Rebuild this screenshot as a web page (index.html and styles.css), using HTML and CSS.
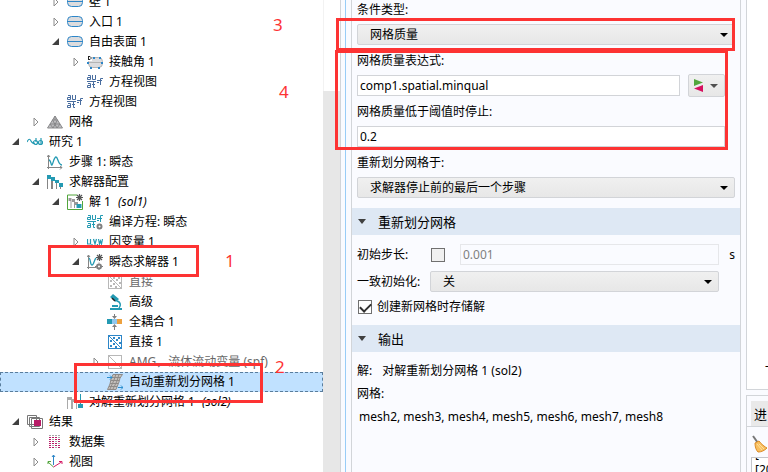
FILE: index.html
```html
<!DOCTYPE html>
<html lang="zh-CN">
<head>
<meta charset="utf-8">
<title>求解器配置</title>
<link rel="stylesheet" href="styles.css">
</head>
<body>
<svg class="sprite" aria-hidden="true">
  <symbol id="closed" viewBox="0 0 8 10"><path d="M2 1v8l4-4z" fill="#fff" stroke="#8c8c8c"/></symbol>
  <symbol id="open" viewBox="0 0 8 10"><path d="M7 1v7H0z" fill="#404040"/></symbol>
  <symbol id="boundary" viewBox="0 0 16 16"><rect x=".5" y="2.500" width="15" height="10" rx="4" fill="#dcdcde" stroke="#2d86c8"/><path d="M1 7.500h14" stroke="#2d86c8"/></symbol>
  <symbol id="contact" viewBox="0 0 16 16"><rect x="1.500" y="3.500" width="14" height="10" rx="4" fill="#dcdcde" stroke="#b4b4b4"/><path d="M1 8.500h14" stroke="#b4b4b4"/><path d="M0 1h5v6H0z" fill="#fff"/><path d="M1.500 2v4M1 2.500h2l1 1v1l-1 1H1" fill="none" stroke="#222"/><path d="M6 3h2v2H6zM12 3h2v2h-2zM0 8h2v2H0zM14 8h2v2h-2zM3 13h2v2H3zM11 13h2v2h-2z" fill="#2d86c8"/></symbol>
  <symbol id="equation" viewBox="0 0 16 16"><g fill="none" stroke="#486d9f"><path d="M1 1.500h2.500v4H.5v-2h3M5.500 1v4.500h3V1M0 7.500h9M1 9.500h2.500v4H.5v-2h3M6.500 8v5.500H8M5 10.500h3M10 6.500h2M10 8.500h2M13.500 11V4.500H16M12 6.500h3"/></g></symbol>
  <symbol id="compiled" viewBox="0 0 16 16"><g fill="none" stroke="#249ab3"><path d="M1 1.500h2.500v4H.5v-2h3M5.500 1v4.500h3V1M0 7.500h9M1 9.500h2.500v4H.5v-2h3M6.500 8v5.500H8M5 10.500h3M10 4.500h2M10 6.500h2M13.500 8V1.500H16M12 4.500h3"/></g><circle cx="12.500" cy="12.500" r="2" fill="#fff" stroke="#808080" stroke-width="2"/></symbol>
  <symbol id="mesh" viewBox="0 0 16 16"><path d="M8 2 15.500 14H.5z" fill="#bdbdbf" stroke="#8b8b8d"/><path d="M5.500 6h5L6 14 3 10h10l-3 4zM8 2v4" fill="none" stroke="#858587"/></symbol>
  <symbol id="study" viewBox="0 0 16 16"><path d="M0 8c2-4 3-3 4-1s3 3 4 2M14 4v7M9 4v4" fill="none" stroke="#249ab3" stroke-width="1.200"/><circle cx="8.500" cy="8.500" r="2" fill="none" stroke="#249ab3" stroke-width="1.200"/><circle cx="13.500" cy="8.500" r="2" fill="none" stroke="#249ab3" stroke-width="1.200"/></symbol>
  <symbol id="curve" viewBox="0 0 16 16"><path d="M1.500 15V1M0 3l1.500-2L3 3M0 13.500h15M13 12l2 1.500-2 2" fill="none" stroke="#858585"/><path d="M2 6c2 0 2 6 3 5s2-8 4-8 2 8 6 8" fill="none" stroke="#249ab3" stroke-width="1.300"/></symbol>
  <symbol id="config" viewBox="0 0 16 16"><path d="M.5 5v10M4.500 5v10M5.500 7v8M9.500 9v6M13.500 11v4" stroke="#858585"/><path d="M0 1h4v4H0zM4 3h4v4H4zM8 6h4v3H8zM12 9h4v4h-4z" fill="#249ab3"/></symbol>
  <symbol id="solution" viewBox="0 0 16 16"><path d="M10 1H.5v14.500h15V7" fill="#fff" stroke="#52a63d"/><path d="M1.500 4h3v10h-1V7h-2zM5 5h3v3h3v6h-1v-3H8v3H7V8H5z" fill="#999"/><path d="M9.500 10h5v4h-5z" fill="#249ab3"/><path d="M12.500 0v7M9 3.500h7M10 1l5 5M15 1l-5 5" stroke="#555" stroke-width="1.200"/></symbol>
  <symbol id="uvw" viewBox="0 0 16 16"><path d="M.5 5v5h3V5M5 10v2M6.500 5 8 10 9.500 5M10.500 10v2M11.500 5l1 5 1-3 1 3 1-5" fill="none" stroke="#249ab3" stroke-width="1.200"/></symbol>
  <symbol id="transient" viewBox="0 0 16 16"><path d="M1.500 15V1M0 3l1.500-2L3 3M0 13.500h9" fill="none" stroke="#858585"/><path d="M2 4c2 1 1 7 3 7s2-5 4-7" fill="none" stroke="#249ab3" stroke-width="1.300"/><path d="M12.500 0v7M9 3.500h7M10 1l5 5M15 1l-5 5" stroke="#555" stroke-width="1.200"/><circle cx="12" cy="12.500" r="2" fill="#fff" stroke="#808080" stroke-width="2"/><path d="M12 8.500v1M12 15v1M8 12.500h1M15 12.500h1" stroke="#808080"/></symbol>
  <symbol id="direct" viewBox="0 0 16 16"><rect x="1.500" y="1.500" width="13" height="13" fill="#fff" stroke="currentColor"/><path d="m2 2 12 12" stroke="currentColor"/><path d="M6 3h2v2H6zM11 3h2v2h-2zM9 5h2v2H9zM3 6h2v2H3zM12 8h2v2h-2zM3 11h2v2H3zM6 9h2v2H6zM8 12h2v2H8z" fill="currentColor"/></symbol>
  <symbol id="amg" viewBox="0 0 16 16"><rect x="1.500" y="1.500" width="13" height="13" fill="#fff" stroke="#b8b8b8"/><path d="m2 2 12 12" stroke="#b8b8b8"/></symbol>
  <symbol id="advanced" viewBox="0 0 16 16"><path d="M3 3 6 0l6 5-3 3zM3 14h12v2H3zM5 11h6v2H5z" fill="#249ab3"/><path d="M10 7c4 1 4 5 2 7" fill="none" stroke="#249ab3" stroke-width="1.500"/><path d="m5 4 3 3" stroke="#222" stroke-width="1.500"/></symbol>
  <symbol id="coupled" viewBox="0 0 16 16"><path d="M0 5h5v5H0z" fill="#249ab3"/><path d="M5 5h5v5H5z" fill="#91c7ee"/><path d="M10 5h5v5h-5z" fill="#eda13e"/><path d="M7.500 0v4M7.500 12v4" stroke="#808080"/><path d="M5 2h5L7.500 5zM5 13h5l-2.500-3z" fill="#808080"/></symbol>
  <symbol id="remesh" viewBox="0 0 16 16"><path d="M6 .5h9.500L13 4l-1 4-3 7.500H.5L3 10l1-5z" fill="#c4c0bc" stroke="#8f8b88"/><path d="M9 0 7 6 3 15M12 0l-2 7-4 8M5 3.500h9M4 6.500h8M3 9.500h8M2 12.500h8" fill="none" stroke="#8f8b88"/><path d="M0 3.500h5M3 1.500l2 2-2 2M11 13.500h5M14 11.500l2 2-2 2" fill="none" stroke="#2d8fd0"/></symbol>
  <symbol id="copy" viewBox="0 0 16 16"><path d="M0 3h5v12H4V6H1v9H0zM5 5h5v10H9V8H6v7H5z" fill="#aaa"/><path d="M13.500 0v12" stroke="#249ab3"/><path d="M10 6h6l-2.500 4zM11 10h5v4h-5z" fill="#249ab3"/></symbol>
  <symbol id="results" viewBox="0 0 16 16"><path d="M.5 1.500h9v9h-9zM2.500 3.500h10v9h-10zM4.500 4.500h11v10h-11z" fill="#fff" stroke="#777"/><path d="M7 6h7v6H7z" fill="#b81c67"/></symbol>
  <symbol id="dataset" viewBox="0 0 16 16"><path d="M2 3.500h2M2 5.500h2M2 7.500h2M2 9.500h2M2 11.500h2M2 13.500h2M5 3.500h2M5 7.500h2M5 9.500h2M5 13.500h2M8 3.500h2M8 5.500h2M8 9.500h2M8 11.500h2M11 5.500h2M11 7.500h2M11 11.500h2M11 13.500h2" stroke="#b81c67"/><path d="M2 1.500h2M5 1.500h2M8 1.500h2M11 1.500h2M5 5.500h2M8 7.500h2M11 3.500h2M11 9.500h2M5 11.500h2M8 13.500h2" stroke="#a8a8a8"/></symbol>
  <symbol id="view" viewBox="0 0 16 16"><g fill="none"><path d="M6.500 11V1M5 3l1.500-2L8 3" stroke="#2d86c8"/><path d="M6.500 13 1 8M1 10V7.500h3" stroke="#52a63d"/><path d="m6.500 13 8-5M12 7.500h3V10" stroke="#d51c67"/></g></symbol>
</svg>

<main class="app">
  <section class="model">
    <ul class="tree">
      <li class="row l2"><svg class="caret"><use href="#closed"/></svg><svg class="icon"><use href="#boundary"/></svg><span>壁 1</span></li>
      <li class="row l2"><svg class="caret"><use href="#closed"/></svg><svg class="icon"><use href="#boundary"/></svg><span>入口 1</span></li>
      <li class="row l2"><svg class="caret"><use href="#open"/></svg><svg class="icon"><use href="#boundary"/></svg><span>自由表面 1</span></li>
      <li class="row l3"><svg class="caret"><use href="#closed"/></svg><svg class="icon"><use href="#contact"/></svg><span>接触角 1</span></li>
      <li class="row l3"><svg class="caret"></svg><svg class="icon"><use href="#equation"/></svg><span>方程视图</span></li>
      <li class="row l2"><svg class="caret"></svg><svg class="icon"><use href="#equation"/></svg><span>方程视图</span></li>
      <li class="row l1"><svg class="caret"><use href="#closed"/></svg><svg class="icon"><use href="#mesh"/></svg><span>网格</span></li>
      <li class="row l0"><svg class="caret"><use href="#open"/></svg><svg class="icon"><use href="#study"/></svg><span>研究 1</span></li>
      <li class="row l1"><svg class="caret"></svg><svg class="icon"><use href="#curve"/></svg><span>步骤 1: 瞬态</span></li>
      <li class="row l1"><svg class="caret"><use href="#open"/></svg><svg class="icon"><use href="#config"/></svg><span>求解器配置</span></li>
      <li class="row l2"><svg class="caret"><use href="#open"/></svg><svg class="icon"><use href="#solution"/></svg><span>解 1 <i>(sol1)</i></span></li>
      <li class="row l3"><svg class="caret"></svg><svg class="icon"><use href="#compiled"/></svg><span>编译方程: 瞬态</span></li>
      <li class="row l3"><svg class="caret"><use href="#closed"/></svg><svg class="icon"><use href="#uvw"/></svg><span>因变量 1</span></li>
      <li class="row l3"><svg class="caret"><use href="#open"/></svg><svg class="icon"><use href="#transient"/></svg><span>瞬态求解器 1</span></li>
      <li class="row l4 off"><svg class="caret"></svg><svg class="icon"><use href="#direct"/></svg><span>直接</span></li>
      <li class="row l4"><svg class="caret"></svg><svg class="icon"><use href="#advanced"/></svg><span>高级</span></li>
      <li class="row l4"><svg class="caret"></svg><svg class="icon"><use href="#coupled"/></svg><span>全耦合 1</span></li>
      <li class="row l4"><svg class="caret"></svg><svg class="icon"><use href="#direct"/></svg><span>直接 1</span></li>
      <li class="row l4 off"><svg class="caret"><use href="#closed"/></svg><svg class="icon"><use href="#amg"/></svg><span>AMG，流体流动变量 (spf)</span></li>
      <li class="row l4 selected"><svg class="caret"></svg><svg class="icon"><use href="#remesh"/></svg><span>自动重新划分网格 1</span></li>
      <li class="row l2"><svg class="caret"></svg><svg class="icon"><use href="#copy"/></svg><span>对解重新划分网格 1 <i>(sol2)</i></span></li>
      <li class="row l0"><svg class="caret"><use href="#open"/></svg><svg class="icon"><use href="#results"/></svg><span>结果</span></li>
      <li class="row l1"><svg class="caret"><use href="#closed"/></svg><svg class="icon"><use href="#dataset"/></svg><span>数据集</span></li>
      <li class="row l1"><svg class="caret"><use href="#closed"/></svg><svg class="icon"><use href="#view"/></svg><span>视图</span></li>
    </ul>
    <div class="track"><div class="thumb"></div></div>
  </section>

  <form class="settings">
    <div class="fields">
      <label for="condition">条件类型:</label>
      <div class="pick"><select id="condition"><option>网格质量</option></select></div>
      <label for="expr">网格质量表达式:</label>
      <div class="expr-row">
        <input type="text" id="expr" value="comp1.spatial.minqual">
        <button type="button" class="replace" aria-label="替换表达式">
          <svg width="10" height="14" viewBox="0 0 10 14"><path d="M0 0v7l9-3.500z" fill="#52a63d"/><path d="M9 6v7L0 9.500z" fill="#d6105f"/></svg>
          <svg width="8" height="4" viewBox="0 0 8 4"><path d="M0 0h8L4 4z" fill="#505050"/></svg>
        </button>
      </div>
      <label for="limit">网格质量低于阈值时停止:</label>
      <input type="text" id="limit" class="inset" value="0.2">
      <label for="when">重新划分网格于:</label>
      <div class="pick"><select id="when"><option>求解器停止前的最后一个步骤</option></select></div>
    </div>

    <h2>重新划分网格</h2>
    <div class="init">
      <label for="usestep">初始步长:</label>
      <input type="checkbox" id="usestep">
      <input type="text" id="step" class="step" value="0.001" aria-label="初始步长值" disabled>
      <span class="unit">s</span>
      <label for="consistent">一致初始化:</label>
      <div class="pick wide"><select id="consistent"><option>关</option></select></div>
      <div class="store"><input type="checkbox" id="store" checked><label for="store">创建新网格时存储解</label></div>
    </div>

    <h2>输出</h2>
    <dl class="output">
      <div><dt>解:</dt><dd>对解重新划分网格 1 (sol2)</dd></div>
      <dt>网格:</dt>
      <dd class="meshes">mesh2, mesh3, mesh4, mesh5, mesh6, mesh7, mesh8</dd>
    </dl>
  </form>

  <aside class="side">
    <div class="graphics"><span>-</span></div>
    <div class="progress">
      <div class="tabs"><button type="button">进</button></div>
      <div class="tools">
        <svg width="16" height="18" viewBox="0 0 16 18"><path d="m1 1 5 7" stroke="#777" stroke-width="2"/><path d="m3 8 4-2c2 3 6 6 8 7-3 3-6 4-9 4-2-2-3-5-3-9z" fill="#f8bf60" stroke="#dc8b24"/><path d="m5 9 5 6M7 9l5 5" stroke="#ffe09a"/></svg>
      </div>
      <div class="log"><p>[20</p><p>[20</p></div>
    </div>
  </aside>

  <div class="mark box1"></div>
  <div class="mark box2"></div>
  <div class="mark box3"></div>
  <div class="mark box4"></div>
  <span class="num n1">1</span>
  <span class="num n2">2</span>
  <span class="num n3">3</span>
  <span class="num n4">4</span>
</main>
</body>
</html>
```

FILE: styles.css
```css
* { box-sizing: border-box; }

body {
  margin: 0;
  background: #fafbff;
  color: #000;
  font: 12px/20px "Noto Sans", "Noto Sans CJK SC", sans-serif;
}

.sprite { position: absolute; width: 0; height: 0; }

.app {
  position: relative;
  display: grid;
  grid-template-columns: minmax(0, 341fr) minmax(0, 400fr) 27px;
  grid-template-rows: minmax(0, 1fr);
  height: 100vh;
  overflow: hidden;
}

/* Model tree */
.model {
  display: flex;
  min-height: 0;
  background: #fff;
  border-right: 1px solid #d2d5d9;
}

.tree {
  flex: 1;
  min-width: 0;
  margin: -8px 0 0;
  padding: 0;
  list-style: none;
}

.row {
  display: flex;
  align-items: center;
  height: 20px;
  padding-left: 12px;
  white-space: nowrap;
}

.l1 { padding-left: 32px; }
.l2 { padding-left: 52px; }
.l3 { padding-left: 72px; }
.l4 { padding-left: 92px; }

.caret { flex: none; width: 8px; height: 10px; margin-right: 7px; }
.icon { flex: none; width: 16px; height: 16px; margin-right: 6px; color: #2d86c8; }
.row i { margin-left: 4px; }
.off { color: #686868; }
.off .icon { color: #b8b8b8; }

.selected {
  background: #c0e1ff;
  outline: 1px dashed #597d9d;
  outline-offset: -1px;
}

.track {
  width: 17px;
  padding-top: 91px;
  border-left: 1px solid #f2f2f2;
}

.thumb { height: 100%; margin-left: -1px; background: #e7e7e7; }

/* Settings */
.settings {
  min-width: 0;
  margin-left: 4px;
  padding-left: 5px;
  border-left: 1px solid #99cdf7;
  border-right: 1px solid #d2d5d9;
  background: linear-gradient(90deg, #fafbff 5px, #d2d5d9 5px, #d2d5d9 6px, #fafbff 6px);
}

.fields {
  display: flex;
  flex-direction: column;
  gap: 5px;
  margin-top: -1px;
  padding: 0 5px 10px 6px;
}

.fields label { height: 20px; line-height: 22px; }

input[type="text"], select {
  width: 100%;
  min-width: 0;
  height: 21px;
  margin: 0;
  border: 1px solid #d2d4d8;
  color: #000;
  font: inherit;
}

input[type="text"] { padding: 0 2px; background: #fff; }

select {
  display: block;
  padding: 0 12px;
  border-radius: 2px;
  background: linear-gradient(#f0f0f0, #e7e7e7);
  appearance: none;
}

.pick { position: relative; }

.pick::after {
  content: "";
  position: absolute;
  top: 9px;
  right: 7px;
  border: 4px solid transparent;
  border-top-color: #000;
  border-bottom: 0;
  pointer-events: none;
}

.expr-row {
  display: flex;
  align-items: center;
  gap: 8px;
  height: 21px;
  margin-right: 10px;
}

.fields .inset { width: auto; margin-right: 10px; }

.replace {
  display: flex;
  flex: none;
  align-items: center;
  justify-content: space-between;
  width: 37px;
  height: 23px;
  padding: 0 6px 0 5px;
  border: 1px solid #d2d4d8;
  border-radius: 2px;
  background: linear-gradient(#f0f0f0, #e7e7e7);
}

h2 {
  display: flex;
  align-items: center;
  gap: 12px;
  height: 27px;
  margin: 0;
  padding-left: 6px;
  border-left: 1px solid #d2d5d9;
  background: #dee8f4;
  font-size: 13px;
  font-weight: 400;
}

h2::before {
  content: "";
  border: 4px solid transparent;
  border-top: 5px solid #404040;
  border-bottom: 0;
}

.init {
  display: grid;
  grid-template-columns: 73px 30px minmax(0, 1fr) 16px;
  row-gap: 6px;
  align-items: center;
  padding: 9px 5px 9px 6px;
}

input[type="checkbox"] {
  display: grid;
  place-items: center;
  width: 14px;
  height: 14px;
  margin: 0 1px;
  border: 1px solid #707070;
  background: #f0f0f0;
  appearance: none;
}

input[type="checkbox"]:checked { background: #fff; }

input[type="checkbox"]:checked::before {
  content: "";
  width: 5px;
  height: 9px;
  margin-bottom: 2px;
  border: solid #303030;
  border-width: 0 2px 2px 0;
  transform: rotate(45deg);
}

input.step { border-color: #e6e7ea; background: #fafbff; color: #808080; }
.unit { text-align: right; }
.wide { grid-column: 2 / 4; }

.store {
  display: flex;
  grid-column: 1 / -1;
  gap: 4px;
  align-items: center;
  height: 18px;
}

.output { margin: 0; padding: 7px 6px; line-height: 23px; }
.output div { display: flex; gap: 10px; }
.output dd { margin: 0; white-space: nowrap; }
.output .meshes { padding-left: 2px; }

/* Graphics and progress windows */
.side {
  display: flex;
  flex-direction: column;
  gap: 5px;
  min-width: 0;
  padding-left: 5px;
}

.graphics {
  flex: 1;
  padding: 0 0 13px 18px;
  display: flex;
  align-items: flex-end;
  border: solid #d2d5d9;
  border-width: 0 0 1px 1px;
  background: #fff;
}

.progress {
  height: 77px;
  overflow: hidden;
  border: solid #d2d5d9;
  border-width: 1px 0 0 1px;
}

.tabs {
  padding: 5px 0 0 4px;
  border-bottom: 1px solid #d2d5d9;
}

.tabs button {
  display: block;
  width: 100%;
  height: 25px;
  padding: 0 3px;
  border: 0;
  background: #e9e9e9;
  color: #000;
  font: inherit;
  font-size: 13px;
  text-align: left;
}

.tools { height: 30px; padding: 8px 0 0 5px; }

.log {
  height: 40px;
  margin-left: 4px;
  padding-left: 3px;
  border: 1px solid #c4c6ca;
  border-right: 0;
  background: #fff;
  line-height: 16px;
  overflow: hidden;
}

.log p { margin: 0; }
.log p:first-child { margin-top: -12px; }

/* Annotations drawn over the windows */
.mark { position: absolute; border: 3px solid #fd3333; pointer-events: none; }
.box1 { left: 48px; top: 245px; width: 151px; height: 32px; }
.box2 { left: 74px; top: 363px; width: 189px; height: 40px; }
.box3 { left: 336px; top: 18px; width: 399px; height: 33px; }
.box4 { left: 335px; top: 50px; width: 393px; height: 100px; }

.num { position: absolute; color: #fd3333; font-size: 17px; }
.n1 { left: 225px; top: 251px; }
.n2 { left: 275px; top: 357px; }
.n3 { left: 273px; top: 15px; }
.n4 { left: 279px; top: 82px; }
```
